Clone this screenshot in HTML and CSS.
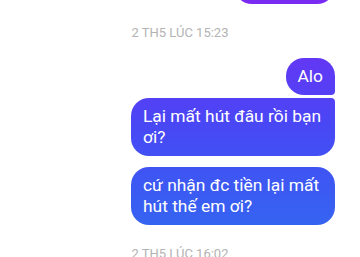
FILE: index.html
```html
<!DOCTYPE html>
<html lang="vi">
<head>
  <meta charset="UTF-8">
  <title>Tin nhắn</title>
  <meta name="viewport" content="width=device-width, initial-scale=1.0">
  <link rel="stylesheet" href="styles.css">
</head>
<body>
  <div class="chat">
    <!-- nhóm tin trước, đã cuộn lên trên -->
    <div class="group">
      <div class="bubble last">Ok bạn ơi!</div>
    </div>

    <div class="time">2 TH5 LÚC 15:23</div>

    <div class="group">
      <div class="bubble first">Alo</div>
      <div class="bubble last">Lại mất hút đâu rồi bạn ơi?</div>
    </div>

    <div class="group">
      <div class="bubble">cứ nhận đc tiền lại mất hút thế em ơi?</div>
    </div>

    <div class="time">2 TH5 LÚC 16:02</div>
  </div>
</body>
</html>
```

FILE: styles.css
```css
body {
  margin: 0;
  background: #fff;
  font-family: Roboto, "Noto Sans", sans-serif;
  overflow: hidden;
}
.chat {
  display: flex;
  flex-direction: column;
  padding: 0 25px 0 12px;
  margin-top: -33px;
}
.group {
  display: flex;
  flex-direction: column;
  align-items: flex-end;
  gap: 3px;
}
.bubble {
  box-sizing: border-box;
  max-width: 204px;
  padding: 8px 12px;
  font-size: 17.4px;
  line-height: 21px;
  color: #fff;
  border-radius: 18px;
  background: linear-gradient(180deg, #7a2af2 0px, #5b3cf5 77px, #4848f5 127px, #3a5cf2 197px, #306cf0 257px);
  background-attachment: fixed;
}
.bubble.first {
  border-bottom-right-radius: 4px;
}
.bubble.last {
  border-top-right-radius: 4px;
}
.group + .group {
  margin-top: 11px;
}
.time {
  margin: 21px 0 17px;
  text-align: center;
  font-size: 13px;
  line-height: 16px;
  color: #b3b3b3;
  padding-left: 13px;
}
```
